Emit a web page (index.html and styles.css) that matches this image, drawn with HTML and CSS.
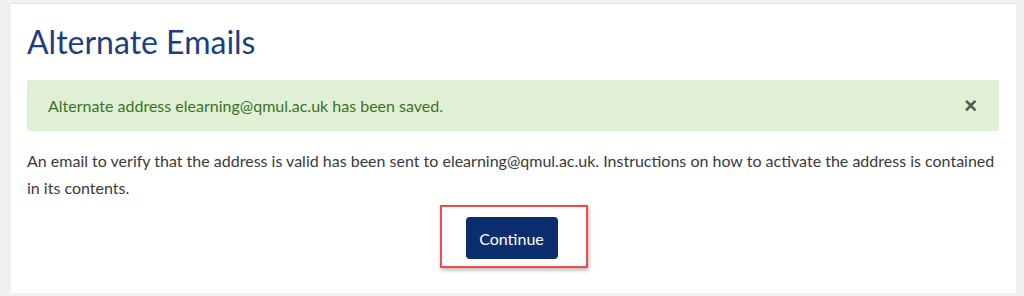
FILE: index.html
```html
<!DOCTYPE html>
<html lang="en">
<head>
  <meta charset="UTF-8">
  <meta name="viewport" content="width=device-width, initial-scale=1.0">
  <title>Alternate Emails</title>
  <link rel="stylesheet" href="styles.css">
</head>
<body>
  <div class="page">
    <div class="panel">
      <h1 class="title">Alternate Emails</h1>
      <div class="alert">
        <span>Alternate address elearning@qmul.ac.uk has been saved.</span>
        <button class="alert-close" aria-label="Close">&times;</button>
      </div>
      <p class="message">An email to verify that the address is valid has been sent to elearning@qmul.ac.uk. Instructions on how to activate the address is contained in its contents.</p>
      <div class="actions">
        <span class="highlight">
          <button class="btn-primary">Continue</button>
        </span>
      </div>
    </div>
  </div>
</body>
</html>
```

FILE: styles.css
```css
:root {
  --page-bg: #f0f0f0;
  --navy: #0d2e6e;
  --title: #1c3f7f;
  --alert-bg: #dff0d5;
  --alert-text: #3d7027;
  --text: #3a3a3a;
  --font-family: Lato, 'Open Sans', sans-serif;
}
* { box-sizing: border-box; margin: 0; padding: 0; }
body {
  background: var(--page-bg);
  font-family: var(--font-family);
  color: var(--text);
}
.page {
  padding: 3px 8px 3px 11px;
}
.panel {
  background: #ffffff;
  border-top: 1px solid #e4e4e4;
  padding: 19px 16px 24px;
  min-height: 290px;
}
.title {
  font-weight: 400;
  font-size: 32px;
  line-height: 38px;
  color: var(--title);
  margin-bottom: 19px;
}
.alert {
  background: var(--alert-bg);
  color: var(--alert-text);
  border-radius: 3px;
  height: 51px;
  padding: 0 22px 0 21px;
  display: flex;
  align-items: center;
  justify-content: space-between;
  font-size: 16px;
  margin-right: 1px;
}
.alert-close {
  border: none;
  background: none;
  font-family: Arial, 'Liberation Sans', sans-serif;
  font-weight: 700;
  font-size: 22px;
  color: #4e5a4c;
  line-height: 1;
}
.message {
  margin-top: 16px;
  font-size: 16px;
  line-height: 27px;
}
.actions {
  display: flex;
  justify-content: center;
  margin-top: 4px;
}
.highlight {
  display: inline-block;
  border: 2px solid #f04a4a;
  padding: 10px 28px 7px 24px;
  box-shadow: 1px 2px 4px rgba(0, 0, 0, 0.3);
}
.btn-primary {
  display: block;
  background: var(--navy);
  color: #ffffff;
  border: none;
  border-radius: 4px;
  width: 92px;
  height: 42px;
  font-family: var(--font-family);
  font-size: 16px;
}
```
